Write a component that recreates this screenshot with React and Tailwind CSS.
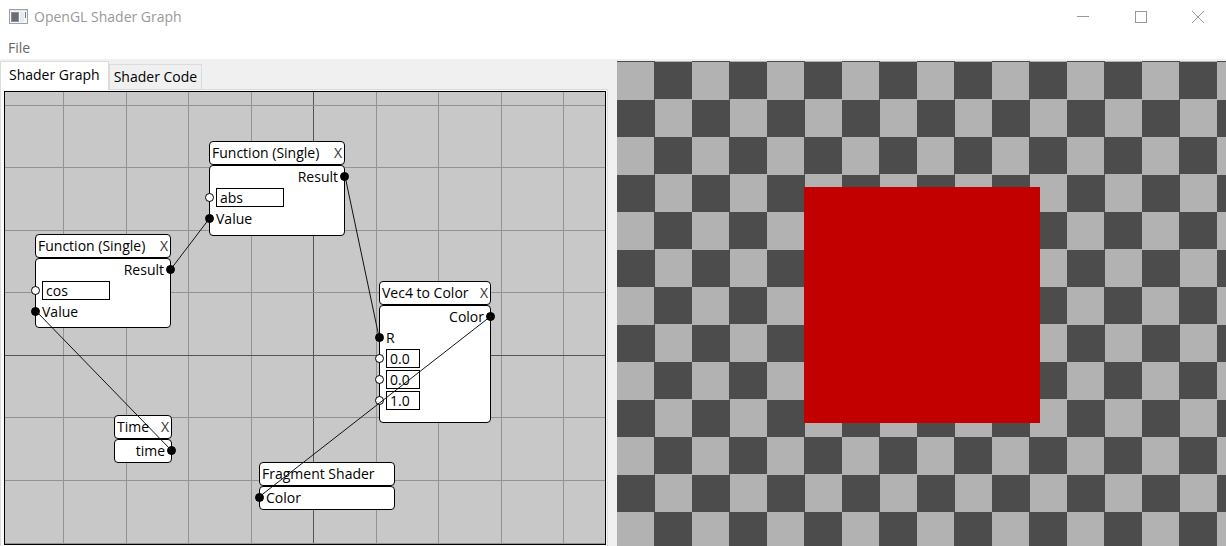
import { useState } from "react";

const nodes = [
  {
    id: "abs",
    title: "Function (Single)",
    place: "left-[204px] top-[49px] w-[136px]",
    body: "h-[71px]",
    closable: true,
    rows: [
      { side: "out", label: "Result", linked: true },
      { side: "in", name: "Function", value: "abs", field: "w-[68px]" },
      { side: "in", label: "Value", linked: true },
    ],
  },
  {
    id: "cos",
    title: "Function (Single)",
    place: "left-[30px] top-[142px] w-[136px]",
    body: "h-[70px]",
    closable: true,
    rows: [
      { side: "out", label: "Result", linked: true },
      { side: "in", name: "Function", value: "cos", field: "w-[68px]" },
      { side: "in", label: "Value", linked: true },
    ],
  },
  {
    id: "vec4",
    title: "Vec4 to Color",
    place: "left-[374px] top-[189px] w-[112px]",
    body: "h-[118px]",
    closable: true,
    rows: [
      { side: "out", label: "Color", linked: true },
      { side: "in", label: "R", linked: true },
      { side: "in", name: "G", value: "0.0", field: "w-[34px]" },
      { side: "in", name: "B", value: "0.0", field: "w-[34px]" },
      { side: "in", name: "A", value: "1.0", field: "w-[34px]" },
    ],
  },
  {
    id: "time",
    title: "Time",
    place: "left-[109px] top-[323px] w-[58px]",
    body: "h-6",
    closable: true,
    rows: [{ side: "out", label: "time", linked: true }],
  },
  {
    id: "fragment",
    title: "Fragment Shader",
    place: "left-[254px] top-[370px] w-[136px]",
    body: "h-6",
    closable: false,
    rows: [{ side: "in", label: "Color", linked: true }],
  },
];

const wires = [
  [166, 177, 204, 127],
  [340, 84, 374, 245],
  [31, 219, 166, 358],
  [486, 224, 254, 405],
];

const columns = [58, 121, 183, 246, 308, 371, 433, 496, 558];
const lines = [13, 75, 138, 200, 263, 325, 388, 451];

function Port({ side, linked }) {
  return (
    <span
      className={
        "absolute top-[6px] size-[9px] rounded-full border border-black " +
        (side === "in" ? "-left-[5px] " : "-right-[5px] ") +
        (linked ? "bg-black" : "bg-white")
      }
    />
  );
}

function Row({ row }) {
  return (
    <div
      className={
        "relative flex h-[21px] items-center px-[6px] " +
        (row.side === "out" ? "justify-end" : "justify-start")
      }
    >
      <Port side={row.side} linked={row.linked} />
      {row.label ? (
        <span>{row.label}</span>
      ) : (
        <input
          aria-label={row.name}
          defaultValue={row.value}
          className={"h-[19px] border border-black bg-white px-[3px] leading-4 outline-none " + row.field}
        />
      )}
    </div>
  );
}

function Node({ node }) {
  return (
    <section className={"absolute text-[14px] leading-5 text-black " + node.place}>
      <header className="flex h-6 items-center justify-between whitespace-nowrap rounded-[4px] border border-black bg-white px-[2px]">
        <h2>{node.title}</h2>
        {node.closable && (
          <button type="button" aria-label={"Remove " + node.title} className="text-[#333]">X</button>
        )}
      </header>
      <div className={"rounded-[4px] border border-black bg-white " + node.body}>
        {node.rows.map((row, i) => (
          <Row key={i} row={row} />
        ))}
      </div>
    </section>
  );
}

function Grid() {
  return (
    <svg className="absolute inset-0 size-full" shapeRendering="crispEdges" aria-hidden="true">
      {columns.map((x) => (
        <rect key={x} x={x} y="0" width="1" height="100%" fill={x === 308 ? "#555" : "#929292"} />
      ))}
      {lines.map((y) => (
        <rect key={y} x="0" y={y} width="100%" height="1" fill={y === 263 ? "#555" : "#929292"} />
      ))}
    </svg>
  );
}

function GraphCanvas() {
  return (
    <div className="relative min-h-0 flex-1 overflow-hidden border border-black bg-[#c8c8c8]">
      <Grid />
      {nodes.map((node) => (
        <Node key={node.id} node={node} />
      ))}
      <svg className="pointer-events-none absolute inset-0 size-full" aria-hidden="true">
        {wires.map(([x1, y1, x2, y2]) => (
          <line key={x1} x1={x1} y1={y1} x2={x2} y2={y2} stroke="#111" strokeWidth="1" />
        ))}
      </svg>
    </div>
  );
}

function TitleBar() {
  return (
    <header className="flex h-[33px] items-center justify-between pl-[9px]">
      <div className="flex items-center gap-[6px]">
        <svg width="19" height="15" viewBox="0 0 19 15" aria-hidden="true">
          <rect x="0.5" y="0.5" width="18" height="14" fill="#f4f6f8" stroke="#a0a0a0" />
          <rect x="1" y="1" width="17" height="1" fill="#e4e4e4" />
          <rect x="2" y="3" width="8" height="10" fill="#7f93a8" />
          <rect x="3" y="4" width="6" height="8" fill="#6c6c6c" />
          <rect x="11" y="3" width="4" height="10" fill="#e7ebef" />
          <rect x="16" y="3" width="1" height="6" fill="#5f7fa5" />
        </svg>
        <h1 className="text-[14px] leading-5 text-[#999]">OpenGL Shader Graph</h1>
      </div>
      <div className="flex h-full text-[#999]">
        <button type="button" aria-label="Minimize" className="flex w-[58px] items-center justify-center">
          <svg width="12" height="12" viewBox="0 0 12 12"><path d="M0 5.5H12" stroke="currentColor" /></svg>
        </button>
        <button type="button" aria-label="Maximize" className="flex w-[58px] items-center justify-center">
          <svg width="12" height="12" viewBox="0 0 12 12"><rect x="0.5" y="0.5" width="11" height="11" fill="none" stroke="currentColor" /></svg>
        </button>
        <button type="button" aria-label="Close" className="flex w-14 items-center justify-center">
          <svg width="12" height="12" viewBox="0 0 12 12"><path d="M0 0L12 12M12 0L0 12" stroke="currentColor" /></svg>
        </button>
      </div>
    </header>
  );
}

export default function App() {
  const [tab, setTab] = useState("graph");
  const active = "relative z-10 -mb-px h-[29px] border border-b-0 border-[#dcdcdc] bg-white px-2 pb-[2px]";
  const idle = "h-[25px] border border-b-0 border-[#dcdcdc] bg-[#f0f0f0] px-1";
  return (
    <div className="flex h-screen flex-col overflow-hidden bg-white font-['Open_Sans','Noto_Sans',sans-serif]">
      <TitleBar />
      <nav className="flex h-[26px] items-center px-[2px]">
        <button type="button" className="px-[6px] pt-1 text-[14px] leading-5 text-[#666]">File</button>
      </nav>
      <main className="grid min-h-0 flex-1 grid-cols-[617fr_609fr] bg-[#f0f0f0] pt-[2px]">
        <div className="flex min-h-0 min-w-0 flex-col pr-[9px]">
          <div role="tablist" className="flex h-7 items-end text-[14px] leading-5 text-black">
            <button type="button" role="tab" aria-selected={tab === "graph"} onClick={() => setTab("graph")} className={tab === "graph" ? active : idle}>
              Shader Graph
            </button>
            <button type="button" role="tab" aria-selected={tab === "code"} onClick={() => setTab("code")} className={tab === "code" ? active : idle}>
              Shader Code
            </button>
          </div>
          <div role="tabpanel" className="flex min-h-0 flex-1 flex-col border border-b-0 border-[#dcdcdc] bg-[#f9f9f9] pb-px pl-[3px] pr-px pt-px">
            <GraphCanvas />
          </div>
        </div>
        <div
          role="img"
          aria-label="Shader preview"
          className="flex min-w-0 items-center justify-center bg-[conic-gradient(#4c4c4c_25%,#b2b2b2_0_50%,#4c4c4c_0_75%,#b2b2b2_0)] bg-[length:75px_75px] bg-[position:0px_1px] pl-px pt-[3px]"
        >
          <div className="size-[236px] bg-[#c20000]" />
        </div>
      </main>
    </div>
  );
}
